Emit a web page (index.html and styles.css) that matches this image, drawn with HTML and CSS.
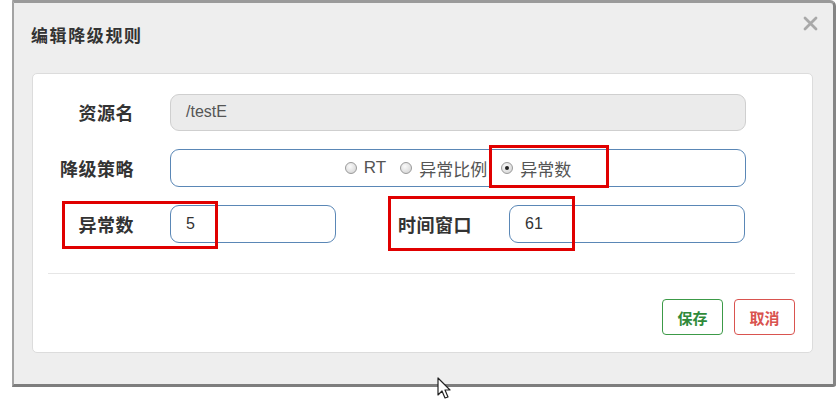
FILE: index.html
```html
<!DOCTYPE html>
<html lang="zh">
<head>
<meta charset="utf-8">
<link rel="stylesheet" href="styles.css">
</head>
<body>
<div class="dialog">
  <div class="header">
    <div class="title">编辑降级规则</div>
    <svg class="close" width="15" height="15" viewBox="0 0 15 15"><path d="M2 2L13 13M13 2L2 13" stroke="#a9a9a9" stroke-width="2.8" stroke-linecap="round"/></svg>
  </div>
  <div class="panel">
    <div class="row">
      <div class="label">资源名</div>
      <div class="input disabled wide">/testE</div>
    </div>
    <div class="row">
      <div class="label">降级策略</div>
      <div class="input wide radios">
        <span class="radio"></span><span class="rtext">RT</span>
        <span class="radio"></span><span class="rtext">异常比例</span>
        <span class="radio checked"></span><span class="rtext">异常数</span>
      </div>
    </div>
    <div class="row">
      <div class="label">异常数</div>
      <div class="input small">5</div>
      <div class="label label2">时间窗口</div>
      <div class="input medium">61</div>
    </div>
    <div class="divider"></div>
    <div class="actions">
      <div class="btn save">保存</div>
      <div class="btn cancel">取消</div>
    </div>
  </div>
</div>
<div class="mark m1"></div>
<div class="mark m2"></div>
<div class="mark m3"></div>
<svg class="cursor" width="16" height="24" viewBox="0 0 16 24"><path d="M1 1L1 18L5 14L8 21L11 20L8 13L13 13Z" fill="#fff" stroke="#222" stroke-width="1.2" stroke-linejoin="round"/></svg>
</body>
</html>
```

FILE: styles.css
```css
html, body {
  margin: 0;
  padding: 0;
  background: #ffffff;
}
body {
  position: relative;
  width: 840px;
  height: 400px;
  overflow: hidden;
  font-family: "Liberation Sans", "Noto Sans CJK SC", sans-serif;
  color: #333;
}
.dialog {
  margin-left: 12px;
  width: 824px;
  height: 387px;
  box-sizing: border-box;
  background: #eeeeee;
  border-style: solid;
  border-width: 3px 3px 3px 2px;
  border-color: #9a9a9a #858585 #7d7d7d #a3a3a3;
  border-radius: 0 6px 3px 0;
}
.header {
  height: 70px;
  display: flex;
  justify-content: space-between;
  align-items: flex-start;
  padding-left: 17px;
  padding-right: 15px;
}
.title {
  margin-top: 24px;
  font-size: 17px;
  line-height: 20px;
  font-weight: 700;
  letter-spacing: 1.6px;
  color: #333;
  white-space: nowrap;
}
.close {
  margin-top: 13px;
}
.panel {
  margin: 0 20px 0 18px;
  height: 280px;
  box-sizing: border-box;
  background: #fff;
  border: 1px solid #dcdcdc;
  border-radius: 5px;
  padding-top: 19px;
}
.row {
  display: flex;
  align-items: center;
  height: 38px;
  margin-bottom: 18px;
}
.label {
  width: 101px;
  margin-right: 36px;
  text-align: right;
  font-size: 18px;
  font-weight: 700;
  letter-spacing: 0.5px;
  color: #333;
  flex: none;
  white-space: nowrap;
}
.label2 {
  width: 75px;
  margin-left: 62px;
  margin-right: 36px;
  text-align: left;
}
.input {
  height: 38px;
  box-sizing: border-box;
  border: 1px solid #5a87b6;
  border-radius: 9px;
  padding-left: 15px;
  display: flex;
  align-items: center;
  font-size: 16px;
  color: #333;
  flex: none;
}
.wide { width: 576px; }
.small { width: 166px; }
.medium { width: 236px; }
.disabled {
  background: #ebebeb;
  border-color: #cfcfcf;
  color: #555;
  height: 37px;
}
.radios {
  justify-content: center;
  padding-left: 0;
  color: #555;
  font-size: 17px;
}
.radio {
  width: 12px;
  height: 12px;
  box-sizing: border-box;
  border-radius: 50%;
  border: 1px solid #9a9a9a;
  background: radial-gradient(circle at 40% 35%, #fafafa 0%, #dcdcdc 70%, #c8c8c8 100%);
  margin-right: 7px;
  position: relative;
  flex: none;
}
.radio.checked::after {
  content: "";
  position: absolute;
  left: 3px;
  top: 3px;
  width: 4px;
  height: 4px;
  border-radius: 50%;
  background: #222;
}
.rtext {
  margin-right: 14px;
  white-space: nowrap;
}
.rtext:last-child {
  margin-right: 0;
}
.divider {
  margin: 30px 17px 0 15px;
  height: 1px;
  background: #e6e6e6;
}
.actions {
  display: flex;
  justify-content: flex-end;
  gap: 11px;
  margin: 25px 17px 0 0;
}
.btn {
  width: 61px;
  height: 36px;
  box-sizing: border-box;
  border-radius: 4px;
  display: flex;
  align-items: center;
  justify-content: center;
  font-size: 15px;
  font-weight: 700;
}
.save {
  border: 1px solid #3c9a47;
  color: #2f8a3a;
}
.cancel {
  border: 1px solid #d9534f;
  color: #d9534f;
}
.mark {
  position: absolute;
  box-sizing: border-box;
  border: 3px solid #e00000;
}
.m1 { left: 489px; top: 145px; width: 120px; height: 43px; }
.m2 { left: 62px; top: 201px; width: 156px; height: 48px; }
.m3 { left: 388px; top: 196px; width: 187px; height: 55px; }
.cursor {
  position: absolute;
  left: 437px;
  top: 377px;
}
```
